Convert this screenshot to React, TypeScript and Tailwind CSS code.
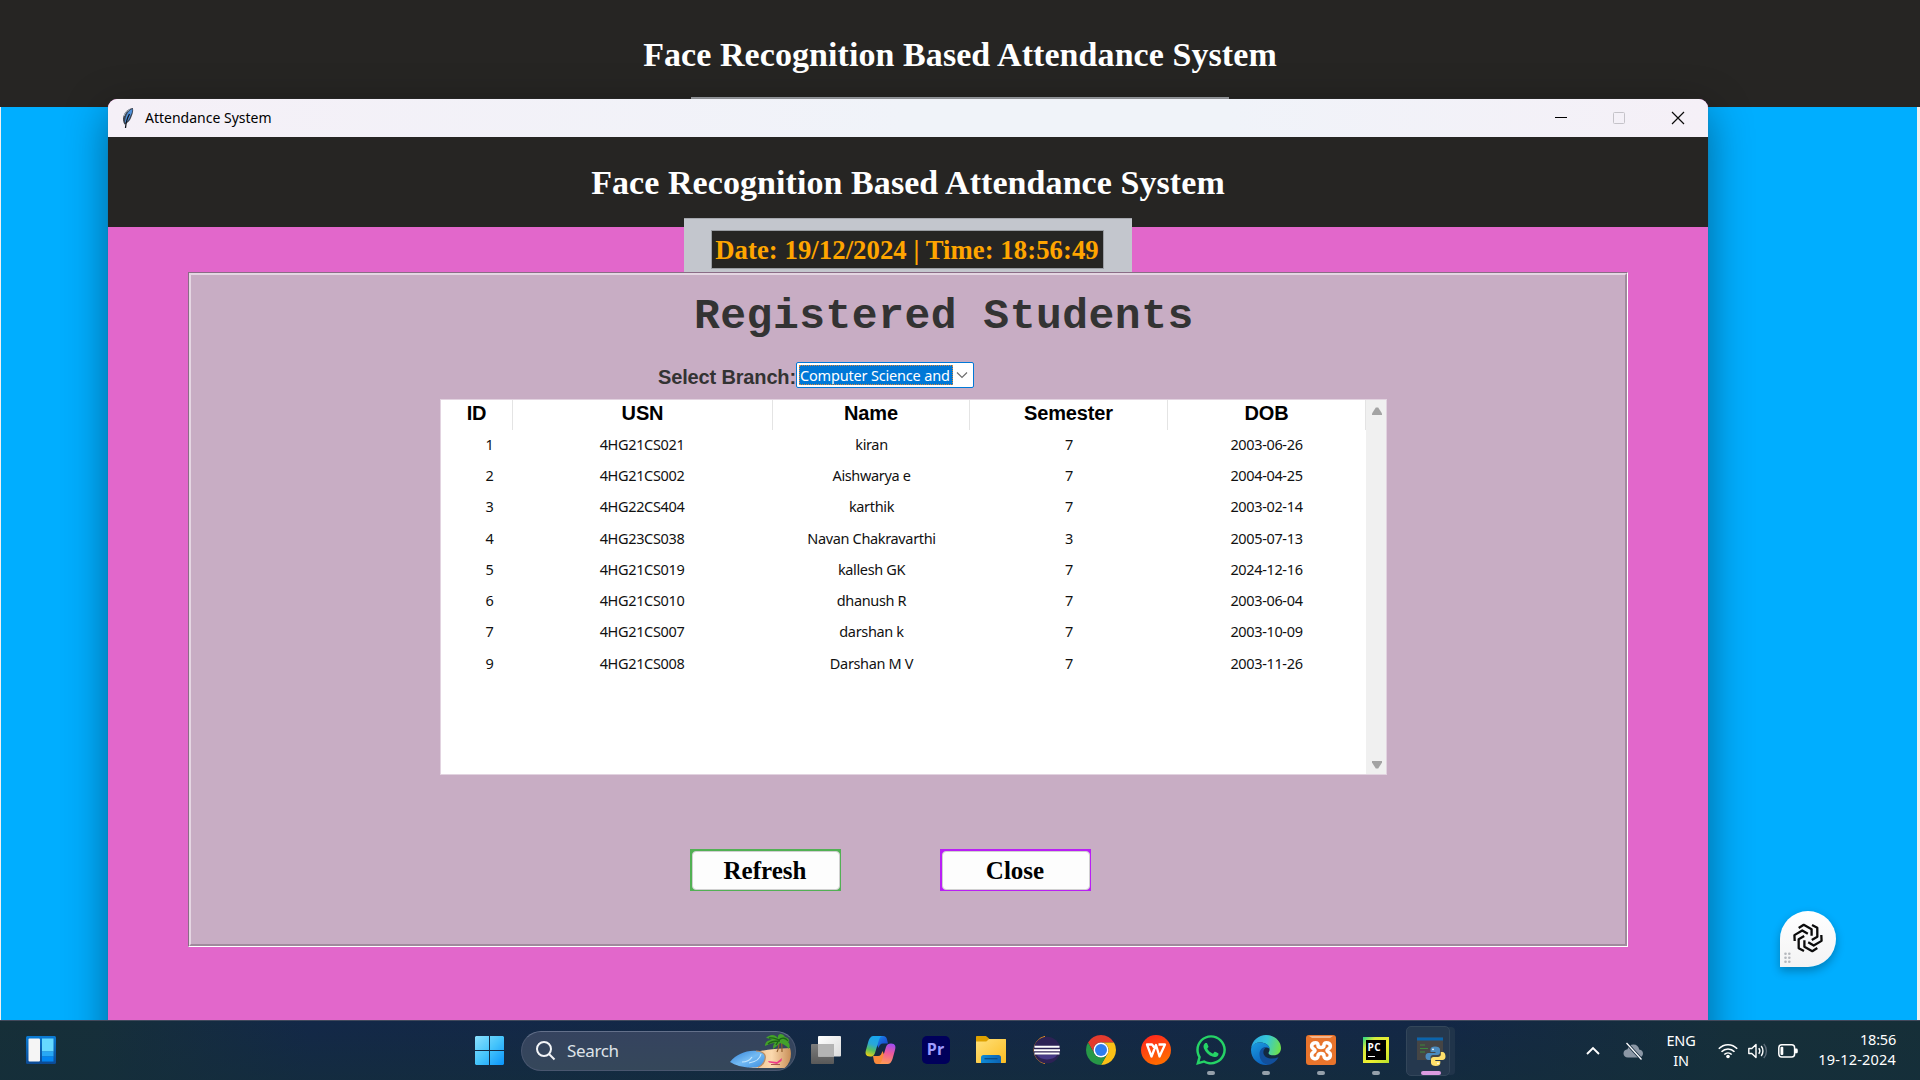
import type { ReactNode } from "react";
import { FaWhatsapp } from "react-icons/fa";

type Student = { id: number; usn: string; name: string; semester: number; dob: string };

const TITLE = "Face Recognition Based Attendance System";

const students: Student[] = [
  { id: 1, usn: "4HG21CS021", name: "kiran", semester: 7, dob: "2003-06-26" },
  { id: 2, usn: "4HG21CS002", name: "Aishwarya e", semester: 7, dob: "2004-04-25" },
  { id: 3, usn: "4HG22CS404", name: "karthik", semester: 7, dob: "2003-02-14" },
  { id: 4, usn: "4HG23CS038", name: "Navan Chakravarthi", semester: 3, dob: "2005-07-13" },
  { id: 5, usn: "4HG21CS019", name: "kallesh GK", semester: 7, dob: "2024-12-16" },
  { id: 6, usn: "4HG21CS010", name: "dhanush R", semester: 7, dob: "2003-06-04" },
  { id: 7, usn: "4HG21CS007", name: "darshan k", semester: 7, dob: "2003-10-09" },
  { id: 9, usn: "4HG21CS008", name: "Darshan M V", semester: 7, dob: "2003-11-26" },
];

const COLS = "grid grid-cols-[72px_260px_197px_198px_198px]";

function Heading() {
  return (
    <h1 className="mt-[2px] whitespace-nowrap font-['Liberation_Serif',serif] text-[34px] leading-[40px] font-bold tracking-[0.070px] text-white">
      {TITLE}
    </h1>
  );
}

function FeatherIcon() {
  return (
    <svg width="14" height="22" viewBox="0 0 14 22">
      <path d="M12 1C8 1.500 4 4 2.500 9C1.500 12 2 15 3.500 17.500C6.500 16 9 14 10 11C11 8 12.800 5 12 1Z" fill="#3a4452" />
      <path d="M11.500 2C8.500 3 6 6 5 9.500C4.400 12 4 14 4 16C6 14.500 8 13 8.800 10.500C9.500 8 11.500 5.500 11.500 2Z" fill="#4f8fd8" />
      <path d="M8.500 7C6.500 10.500 5 14 4.500 21" stroke="#10151d" strokeWidth="1.300" fill="none" />
      <path d="M3 9C3.800 6.500 5.500 4 8.500 2.500" stroke="#b9c4d2" strokeWidth="1" fill="none" />
    </svg>
  );
}

function TitleBar() {
  return (
    <div className="flex h-[38px] shrink-0 items-center bg-[linear-gradient(90deg,#f5f0f7_0%,#f0f3f9_50%,#f0f3f9_70%,#f5f0f7_100%)] pl-[13px]">
      <FeatherIcon />
      <span className="ml-[10px] font-['Noto_Sans',sans-serif] text-[14px] leading-[20px] text-black">Attendance System</span>
      <div className="ml-auto flex items-center">
        <svg width="160" height="38" viewBox="0 0 160 38" fill="none">
          <path d="M7 18.500H19" stroke="#000" />
          <rect x="65.500" y="13.500" width="11" height="11" rx="1" stroke="#c5c3c9" />
          <path d="M124 13L136 25M136 13L124 25" stroke="#0a0a0a" strokeWidth="1.200" />
        </svg>
      </div>
    </div>
  );
}

function BranchSelect() {
  return (
    <div className="flex h-[26px] w-[178px] items-center rounded-[2px] border border-[#0078d7] bg-white p-[2px]">
      <div className="flex h-[20px] w-[154px] items-center overflow-hidden border border-dotted border-[#d98a3c] bg-[#0078d7]">
        <span className="whitespace-nowrap font-['Noto_Sans',sans-serif] text-[14.500px] leading-[18px] tracking-[-0.180px] text-white">
          Computer Science and
        </span>
      </div>
      <svg className="mx-auto" width="12" height="8" viewBox="0 0 12 8" fill="none">
        <path d="M1 1.500L6 6.500L11 1.500" stroke="#6e6e6e" strokeWidth="1.200" />
      </svg>
    </div>
  );
}

function StudentTable() {
  return (
    <div className="flex h-[376px] w-[947px] border border-[#e2d3e0] bg-white">
      <div className="w-[925px]">
        <div className={`${COLS} h-[30px] font-['Liberation_Sans',sans-serif] text-[20px] leading-[27px] font-bold tracking-[-0.150px] text-black`}>
          {["ID", "USN", "Name", "Semester", "DOB"].map((h) => (
            <div key={h} className="border-r border-[#e4e4e4] text-center">
              {h}
            </div>
          ))}
        </div>
        <div className="font-['Noto_Sans',sans-serif] text-[14.500px] tracking-[-0.350px] text-[#111]">
          {students.map((s) => (
            <div key={s.id} className={`${COLS} h-[31.240px] text-center leading-[29px]`}>
              <div className="pl-[25px]">{s.id}</div>
              <div className="pr-[2px]">{s.usn}</div>
              <div>{s.name}</div>
              <div>{s.semester}</div>
              <div className="pr-px">{s.dob}</div>
            </div>
          ))}
        </div>
      </div>
      <div className="flex flex-1 flex-col items-center justify-between bg-[#f0f0f0] pt-[7px] pb-[5px] pl-px">
        <svg width="10" height="8" viewBox="0 0 10 8">
          <path d="M3.800 0.500H6.200L10 6.500V8H0V6.500Z" fill="#a3a3a3" />
        </svg>
        <svg width="10" height="8" viewBox="0 0 10 8">
          <path d="M0 0H10V1.500L6.200 7.500H3.800L0 1.500Z" fill="#a3a3a3" />
        </svg>
      </div>
    </div>
  );
}

function TkButton({ label, color }: { label: string; color: string }) {
  return (
    <div className={`h-[42px] w-[151px] p-[1.500px] ${color}`}>
      <div className="flex h-full items-center justify-center rounded-[4px] border border-[#d0d0d0] bg-[#fdfdfd] pr-px font-['Liberation_Serif',serif] text-[25px] leading-none font-bold text-black">
        {label}
      </div>
    </div>
  );
}

function AttendanceWindow() {
  return (
    <div className="absolute top-[99px] left-[108px] flex h-[960px] w-[1600px] flex-col overflow-hidden rounded-t-[9px] bg-[#e267cb] shadow-[0_12px_44px_rgba(0,0,0,0.420),0_0_1px_rgba(120,110,120,0.900)]">
      <TitleBar />
      <div className="flex h-[90px] shrink-0 items-center justify-center bg-[#262523]">
        <Heading />
      </div>
      <div className="relative mx-auto -mt-[9px] flex h-[54px] w-[448px] shrink-0 justify-center border-t border-[#a5a8ae] bg-[#c3c6cd] pt-[12px] pr-[2px]">
        <div className="flex h-[37px] w-[391px] items-center justify-center bg-[#262523] outline outline-[#9a9da3]">
          <span className="whitespace-nowrap font-['Liberation_Serif',serif] text-[26.700px] leading-[30px] font-bold tracking-[0.060px] text-[#ffa500]">
            Date: 19/12/2024 | Time: 18:56:49
          </span>
        </div>
      </div>
      <div className="ml-[80px] h-[675px] w-[1440px] shrink-0 border border-t-[#8a6c86] border-r-white border-b-white border-l-[#8a6c86]">
        <div className="flex h-full flex-col border-2 border-t-[#e4d6e2] border-r-[#a08a9d] border-b-[#a08a9d] border-l-[#e4d6e2] bg-[#c8adc4]">
          <h2 className="mt-[17px] ml-[503px] font-['Liberation_Mono',monospace] text-[43px] leading-[50px] font-bold tracking-[0.500px] whitespace-nowrap text-[#333]">
            Registered Students
          </h2>
          <div className="mt-[19px] ml-[467px] flex items-center">
            <span className="w-[138px] pt-[4px] font-['Liberation_Sans',sans-serif] text-[20px] leading-[24px] font-bold tracking-[-0.150px] whitespace-nowrap text-[#333]">
              Select Branch:
            </span>
            <BranchSelect />
          </div>
          <div className="mt-[10px] ml-[249px]">
            <StudentTable />
          </div>
          <div className="mt-[74px] ml-[499px] flex gap-[99px]">
            <TkButton label="Refresh" color="bg-[#52b054]" />
            <TkButton label="Close" color="bg-[#b91ff5]" />
          </div>
        </div>
      </div>
    </div>
  );
}

function FloatingAssistant() {
  return (
    <div className="absolute top-[911px] left-[1780px] flex h-[56px] w-[56px] items-center justify-center rounded-full rounded-bl-[3px] bg-linear-to-b from-white to-[#f3f3f4] shadow-[0_4px_10px_rgba(0,0,0,0.280)]">
      <svg width="56" height="56" viewBox="-28 -28 56 56" fill="none">
        {[0, 60, 120, 180, 240, 300].map((a) => (
          <path key={a} transform={`translate(0 -1) rotate(${a})`} d="M-9.300 -10L-4.300 -13.200L3.600 -8.700V-2.300" stroke="#0b0b0b" strokeWidth="2.300" strokeLinejoin="round" />
        ))}
        {[14.700, 18.700, 22.700].map((y) => (
          <g key={y} fill="#b4b7bd">
            <circle cx="-22.500" cy={y} r="1.300" />
            <circle cx="-18.700" cy={y} r="1.300" />
          </g>
        ))}
      </svg>
    </div>
  );
}

function WidgetsIcon() {
  return (
    <svg width="30" height="28" viewBox="0 0 30 28">
      <defs>
        <linearGradient id="wg" x1="0" y1="0" x2="0" y2="1"><stop stopColor="#0a7bd4" /><stop offset="1" stopColor="#0c4a94" /></linearGradient>
      </defs>
      <rect width="30" height="28" rx="1.500" fill="url(#wg)" />
      <rect x="2.500" y="2.500" width="11.500" height="23" rx="1" fill="#f5f5f5" />
      <rect x="16" y="2.500" width="11.500" height="13" fill="#66d9ff" />
      <rect x="16" y="15.500" width="11.500" height="5" fill="#28a8f5" />
      <rect x="16" y="20.500" width="11.500" height="5" fill="#0385f0" />
    </svg>
  );
}

function StartIcon() {
  return (
    <svg width="29" height="29" viewBox="0 0 29 29">
      <defs>
        <linearGradient id="st" x1="0" y1="0" x2="1" y2="1"><stop stopColor="#8be0fd" /><stop offset="0.500" stopColor="#45c4fb" /><stop offset="1" stopColor="#0a94fb" /></linearGradient>
      </defs>
      <path fill="url(#st)" d="M1 0H14V14H0V1ZM15 0H28L29 1V14H15ZM0 15H14V29H1L0 28ZM15 15H29V28L28 29H15Z" />
    </svg>
  );
}

function BeachArt() {
  return (
    <svg width="64" height="38" viewBox="0 0 64 38">
      <defs>
        <linearGradient id="sd" x1="0" y1="0" x2="1" y2="0"><stop stopColor="#e8b680" /><stop offset="0.600" stopColor="#fbd9ae" /><stop offset="1" stopColor="#c98f58" /></linearGradient>
        <linearGradient id="wt" x1="0" y1="0" x2="1" y2="1"><stop stopColor="#2f7fd6" /><stop offset="0.500" stopColor="#74bbf3" /><stop offset="1" stopColor="#3c8fe0" /></linearGradient>
      </defs>
      <path d="M14 31C20 19 36 17 61 16C63 22 62 30 56 36H24C19 35 15 34 14 31Z" fill="url(#sd)" />
      <path d="M1 30C8 22 17 18 28 19C36 19.500 38 24 35 30C32 35 28 36 22 35.500C13 35.500 6 33 1 30Z" fill="url(#wt)" />
      <path d="M27 19C36 19.500 38 24 35 30C33.500 33 31.500 34.500 29 35.300" stroke="#b98b60" strokeWidth="1.200" fill="none" />
      <path d="M20 31C26 30 31 27 32 22M13 30C17 30 21 28 23 25" stroke="#c3e6fc" strokeWidth="1.200" fill="none" />
      <path d="M48 20C50 16 50 11 49 8M53 20C53 15 53 11 52 8" stroke="#8f5c2c" strokeWidth="1.200" fill="none" />
      <path d="M49 6C45 1 40 3 37 6C40 6 41 7 43 8C39 8 36 10 36 14C40 12 43 11 46 11C44 13 44 14 44 17C47 15 49 13 51 11C54 12 57 13 60 17C61 14 61 12 59 10C61 9 60 6 56 5C54 1 48 1 49 6Z" fill="#43a12a" />
      <path d="M40 6C44 5 47 7 50 8C53 5 57 6 59 9M39 12C43 8.500 48 9 51 9M50 8L47 13" stroke="#1c6416" strokeWidth="1.300" fill="none" />
      <path d="M39 29L48 30L53 26L52.500 29L48 32L40 30.500Z" fill="#ee3b86" />
      <path d="M42 32.500H51" stroke="#a8584c" strokeWidth="1" />
    </svg>
  );
}

function SearchBox() {
  return (
    <div className="flex h-[40px] w-[275px] items-center overflow-hidden rounded-full border border-[#49566f] border-t-[#63708a] bg-linear-to-b from-[#35435f] to-[#35475a] pl-[13px]">
      <svg width="22" height="22" viewBox="0 0 22 22" fill="none" stroke="#f2f4f7" strokeWidth="2">
        <circle cx="9" cy="9" r="7" />
        <path d="M14 14L19.500 19.500" />
      </svg>
      <span className="ml-[10px] font-['Noto_Sans',sans-serif] text-[17px] leading-[24px] tracking-[-0.350px] text-[#dfe3e9]">Search</span>
      <div className="mt-[1px] mr-[2px] ml-auto">
        <BeachArt />
      </div>
    </div>
  );
}

function TaskViewIcon() {
  return (
    <svg width="30" height="28" viewBox="0 0 30 28">
      <defs>
        <linearGradient id="tv" x1="0" y1="0" x2="1" y2="1"><stop stopColor="#fff" /><stop offset="1" stopColor="#dcdcdc" /></linearGradient>
        <linearGradient id="tb" x1="0" y1="0" x2="0" y2="1"><stop stopColor="#7c7c7c" /><stop offset="1" stopColor="#595959" /></linearGradient>
      </defs>
      <rect y="8" width="23" height="20" rx="1" fill="url(#tb)" />
      <rect x="7" width="23" height="20.500" rx="1" fill="url(#tv)" />
      <path d="M7 8H23V20.500H7Z" fill="#b4b4b4" />
    </svg>
  );
}

function CopilotIcon() {
  return (
    <svg width="31" height="28" viewBox="0 0 31 28">
      <defs>
        <linearGradient id="c1" x1="0.500" y1="0" x2="0.200" y2="1"><stop stopColor="#18a5ee" /><stop offset="0.400" stopColor="#2aa7d8" /><stop offset="0.680" stopColor="#58bf5c" /><stop offset="1" stopColor="#f2cf12" /></linearGradient>
        <linearGradient id="c2" x1="0.600" y1="0" x2="0.400" y2="1"><stop stopColor="#a14cf0" /><stop offset="0.450" stopColor="#ee5a9b" /><stop offset="1" stopColor="#ff9b55" /></linearGradient>
        <linearGradient id="c3" x1="0" y1="0" x2="1" y2="1"><stop stopColor="#1b8ff0" /><stop offset="1" stopColor="#1838c4" /></linearGradient>
      </defs>
      <path d="M14 0H18C20.500 0 21.500 1.500 22 3.500L23 7.500H18C15.500 7.500 14.500 9 13.500 12L10 4Z" fill="url(#c3)" />
      <path d="M8 20H13C15.500 20 16.500 18 17.500 15L21 23C20 26.500 18.500 28 16 28H12C10 28 9.300 26.500 8.800 24.500Z" fill="#f98a3c" />
      <path d="M8.500 0H18C15.500 0 14.600 2 13.800 4.500L10 17C9 20 7.500 20.500 5 20.500C0.500 20.500 0 17.500 1 14L3.500 5C4.500 2 6 0 8.500 0Z" fill="url(#c1)" />
      <path d="M22.500 28H13C15.500 28 16.400 26 17.200 23.500L21 11C22 8 23.500 7.500 26 7.500C30.500 7.500 31 10.500 30 14L27.500 23C26.500 26 25 28 22.500 28Z" fill="url(#c2)" />
    </svg>
  );
}

function PremiereIcon() {
  return (
    <div className="flex h-[28px] w-[28px] items-center justify-center rounded-[5px] bg-[#00005b]">
      <span className="pb-px font-['Open_Sans',sans-serif] text-[16px] leading-none font-bold text-[#9f9cff]">Pr</span>
    </div>
  );
}

function FolderIcon() {
  return (
    <svg width="30" height="27" viewBox="0 0 30 27">
      <defs>
        <linearGradient id="fo" x1="0" y1="0" x2="1" y2="1"><stop stopColor="#ffe07a" /><stop offset="1" stopColor="#fbbd22" /></linearGradient>
        <linearGradient id="fb" x1="0" y1="0" x2="1" y2="0"><stop stopColor="#0f8ad6" /><stop offset="1" stopColor="#0c63b4" /></linearGradient>
      </defs>
      <path d="M0 1C0 0.400 0.400 0 1 0H9C10 0 10.500 0.300 11 0.800L13.500 3H29C29.600 3 30 3.400 30 4V12H0Z" fill="#dea100" />
      <path d="M0 5.500H9.500C10.500 5.500 11 5 11.500 4.500L13 3H29C29.600 3 30 3.400 30 4V26C30 26.600 29.600 27 29 27H1C0.400 27 0 26.600 0 26Z" fill="url(#fo)" />
      <path d="M5 27V21.500C5 20 6 19 7.500 19H22.500C24 19 25 20 25 21.500V27Z" fill="url(#fb)" />
      <path d="M8.500 22.700H21.500" stroke="#0a4a86" strokeWidth="1.300" />
    </svg>
  );
}

function EclipseIcon() {
  return (
    <svg width="31" height="28" viewBox="0 0 31 28">
      <path d="M15 0.300A14 14 0 0 0 15 27.700A17 17 0 0 1 15 0.300Z" fill="#f7941e" stroke="#f7941e" strokeWidth="0.800" />
      <circle cx="17" cy="14" r="13.300" fill="#2c2255" />
      <path d="M6.500 18.500H27.500A12 9.500 0 0 1 6.500 18.500Z" fill="#463a86" />
      <path d="M4.500 10.800H29.500M4 14.200H30M4.500 17.600H29.500" stroke="#fff" strokeWidth="2" />
    </svg>
  );
}

function ChromeIcon() {
  return (
    <svg width="30" height="30" viewBox="2 2 44 44">
      <path d="M24 13H43.050A22 22 0 0 0 4.950 13L14.470 29.500A11 11 0 0 1 24 13Z" fill="#e33b2e" />
      <path d="M33.530 29.500L24 46A22 22 0 0 0 43.050 13H24A11 11 0 0 1 33.530 29.500Z" fill="#fbc116" />
      <path d="M14.470 29.500L4.950 13A22 22 0 0 0 24 46L33.530 29.500A11 11 0 0 1 14.470 29.500Z" fill="#279847" />
      <circle cx="24" cy="24" r="11" fill="#fff" />
      <circle cx="24" cy="24" r="8.800" fill="#2d7df0" />
    </svg>
  );
}

function WpsIcon() {
  return (
    <svg width="30" height="30" viewBox="0 0 30 30">
      <defs>
        <linearGradient id="wp" x1="0" y1="0" x2="0.400" y2="1"><stop stopColor="#ff2020" /><stop offset="1" stopColor="#ff6a00" /></linearGradient>
      </defs>
      <circle cx="15" cy="15" r="15" fill="url(#wp)" />
      <path d="M14 13.500L11 9.500H6L10.500 21.500L15 10L18.500 21.500L24 9.500H17.500" stroke="#fff" strokeWidth="2.300" strokeLinejoin="round" fill="none" />
    </svg>
  );
}

function EdgeIcon() {
  return (
    <svg width="30" height="30" viewBox="0 0 30 30">
      <defs>
        <linearGradient id="e1" x1="0" y1="0.300" x2="1" y2="0.500"><stop stopColor="#2ba9e4" /><stop offset="0.500" stopColor="#36c8d8" /><stop offset="1" stopColor="#6ee04c" /></linearGradient>
        <linearGradient id="e2" x1="0" y1="0" x2="0.500" y2="1"><stop stopColor="#1b9de2" /><stop offset="1" stopColor="#0c62bd" /></linearGradient>
      </defs>
      <path d="M0.200 13C1.200 5.500 7.500 0 15 0C23.500 0 30 6 30 13C30 17.500 27 20.300 22.500 20.300C19.500 20.300 17.500 19.300 17.500 18C17.500 17.200 18.600 16.600 18.600 14.500C18.600 10 14 7.500 9 7.500C5 7.500 2 9.500 0.200 13Z" fill="url(#e1)" />
      <path d="M0 15C0 10.500 4 7.500 9 7.500C14 7.500 18.600 10 18.600 14C15 10.500 9 13.500 9 19C9 24.500 13 29 18 29.700C9 31.500 0 25 0 15Z" fill="url(#e2)" />
      <path d="M8.500 19C8.500 15 11.500 11.500 15.500 12C13 14 12 16 12.500 18.500C13.500 23 20 25 27.500 22.300C25 27 21 29.300 17.500 29.800C12.500 29.500 8.500 25 8.500 19Z" fill="#124f9c" />
    </svg>
  );
}

function XamppIcon() {
  return (
    <div className="flex h-[30px] w-[30px] items-center justify-center overflow-hidden rounded-[3px] bg-[#e8742c]">
      <svg width="30" height="30" viewBox="0 0 30 30" fill="none">
        <path d="M3 1H27L24 3H6Z" fill="#f3b58c" />
        <path d="M8 8C11 7.300 12 8 12 10C12 12 13.500 12.500 15 12.500S18 12 18 10C18 8 19 7.300 22 8C25 9 25 12.500 22.500 13.800C20.500 14.800 20.500 16.200 22.500 17.200C25 18.500 25 22.500 22 23.500C19.500 24 18 23 18 21C18 19 16.500 18.500 15 18.500S12 19 12 21C12 23 10.500 24 8 23.500C5 22.500 5 18.500 7.500 17.200C9.500 16.200 9.500 14.800 7.500 13.800C5 12.500 5 9 8 8Z" stroke="#fff" strokeWidth="3.600" strokeLinejoin="round" />
      </svg>
    </div>
  );
}

function PycharmIcon() {
  return (
    <div className="flex h-[26px] w-[26px] items-center justify-center bg-[linear-gradient(135deg,#21d789_0%,#d5ec3c_25%,#f0ee30_60%,#b8e02c_100%)]">
      <div className="flex h-[20px] w-[20px] flex-col bg-black pt-[2px] pl-[2px]">
        <span className="font-['Open_Sans',sans-serif] text-[10px] leading-[10px] font-bold tracking-[0.400px] text-white">PC</span>
        <div className="mt-[4px] h-[1.500px] w-[7px] bg-white" />
      </div>
    </div>
  );
}

function PythonConsoleIcon() {
  return (
    <svg width="30" height="30" viewBox="0 0 30 30">
      <rect x="1" y="1.500" width="26" height="22.500" fill="#454545" />
      <rect x="1" y="1.500" width="26" height="3" fill="#0a64ad" />
      <path d="M4 9H9M4 12.500H12M4 16H9" stroke="#3d8a3d" strokeWidth="1.200" />
      <path d="M19 10.500C16 10.500 14.500 11.500 14.500 13.500V16H19.500V17H12.500C10.500 17 9.500 18.500 9.500 20.500C9.500 22.800 10.500 24 12.500 24H14.500V21.500C14.500 20 15.500 19 17 19H21.500C23 19 24 18 24 16.500V13.500C24 11.500 22 10.500 19 10.500Z" fill="#4b8bbf" />
      <path d="M19.800 30C22.800 30 24.300 29 24.300 27V25H19.300V24H26.300C28.500 24 29.500 22.500 29.500 20.500C29.500 18 28.500 16 26.300 16H24.800V18.500C24.800 20 23.500 21 22 21H17.500C16 21 15 22 15 23.500V27C15 29 17 30 19.800 30Z" fill="#ffe06b" />
      <circle cx="17" cy="13.300" r="0.900" fill="#fff" />
      <circle cx="22" cy="27.300" r="0.900" fill="#fff" />
    </svg>
  );
}

function TaskItem({ children, running }: { children: ReactNode; running?: boolean }) {
  return (
    <div className="relative flex h-[60px] w-[55px] items-center justify-center pb-[2px]">
      {children}
      {running && <div className="absolute bottom-[5.500px] h-[4px] w-[8px] rounded-full bg-[#95a0ab]" />}
    </div>
  );
}

function ActiveTaskItem({ children }: { children: ReactNode }) {
  return (
    <div className="relative ml-[3px] flex h-[50px] w-[44px] items-center justify-center rounded-[5px] border border-[#33465a] bg-[#25384e] pl-[6px] shadow-[6px_0_0_-1px_#20344a]">
      {children}
      <div className="absolute bottom-0 left-[14px] h-[4px] w-[20px] rounded-full bg-[#dc9be2]" />
    </div>
  );
}

function SystemTray() {
  return (
    <div className="ml-auto flex h-full items-center text-white">
      <svg width="14" height="9" viewBox="0 0 14 9" fill="none" stroke="#fff" strokeWidth="1.900">
        <path d="M1 8L7 2L13 8" />
      </svg>
      <svg className="ml-[22px]" width="22" height="18" viewBox="0 0 22 18">
        <path d="M6 15.500C3 15.500 1.500 13.800 1.500 11.500C1.500 9 3.200 7.500 5.500 7.300C6.300 4.500 8.500 2.500 11.500 2.500C14.700 2.500 16.800 4.500 17.200 7.500C19.500 7.700 21 9.300 21 11.500C21 13.800 19.500 15.500 17 15.500Z" fill="#8b97a5" />
        <path d="M4.500 1L19.500 17.500" stroke="#132a3d" strokeWidth="3" />
        <path d="M4.500 1L19.500 17.500" stroke="#fff" strokeWidth="1.300" />
      </svg>
      <div className="ml-[17px] w-[40px] pb-[2px] text-center font-['Noto_Sans',sans-serif] text-[14.500px] leading-[20px] tracking-[-0.200px]">
        <div>ENG</div>
        <div>IN</div>
      </div>
      <svg className="ml-[17px]" width="20" height="16" viewBox="0 0 20 16" fill="none" stroke="#fff" strokeWidth="1.600">
        <path d="M0.800 5.800C6 0.300 14 0.300 19.200 5.800M3.500 8.800C7.200 5 12.800 5 16.500 8.800M6.300 11.500C8.400 9.500 11.600 9.500 13.700 11.500" />
        <circle cx="10" cy="13.500" r="1.800" fill="#fff" stroke="none" />
      </svg>
      <svg className="ml-[10px]" width="20" height="16" viewBox="0 0 20 16" fill="none" stroke="#fff" strokeWidth="1.400">
        <path d="M0.800 5.500H3.800L8 1.500V14.500L3.800 10.500H0.800Z" strokeLinejoin="round" />
        <path d="M10.800 5.200C12 6.800 12 9.200 10.800 10.800M13.200 3C15.500 5.800 15.500 10.200 13.200 13" />
        <path d="M15.800 1C19.300 4.800 19.300 11.200 15.800 15" stroke="#5c6b78" />
      </svg>
      <svg className="ml-[10px]" width="20" height="14" viewBox="0 0 20 14" fill="none">
        <rect x="0.800" y="0.800" width="15.800" height="12.200" rx="3" stroke="#fff" strokeWidth="1.500" />
        <rect x="2.500" y="2.800" width="2.800" height="8.200" rx="1" fill="#fff" />
        <path d="M17 4.500H18.500C19.300 4.500 19.800 5 19.800 7S19.300 9.300 18.500 9.300H17Z" fill="#fff" />
      </svg>
      <div className="mr-[24px] w-[98px] pb-[4px] text-right font-['Noto_Sans',sans-serif] text-[14.500px] leading-[20px]">
        <div className="tracking-[-0.200px]">18:56</div>
        <div className="tracking-[0.200px]">19-12-2024</div>
      </div>
    </div>
  );
}

function Taskbar() {
  return (
    <div className="absolute bottom-0 left-0 flex h-[60px] w-full items-center border-t border-[#42495c] bg-[linear-gradient(180deg,rgba(22,47,58,0)_0%,rgba(20,46,58,0.600)_100%),linear-gradient(90deg,#162f38_0%,#162f3a_5%,#132848_16%,#132746_75%,#162f3a_90%,#162f38_100%)]">
      <div className="ml-[26px] w-[449px] pb-px">
        <WidgetsIcon />
      </div>
      <StartIcon />
      <div className="ml-[17px]">
        <SearchBox />
      </div>
      <div className="ml-[2px] flex items-center">
        <TaskItem><TaskViewIcon /></TaskItem>
        <TaskItem><CopilotIcon /></TaskItem>
        <TaskItem><PremiereIcon /></TaskItem>
        <TaskItem><FolderIcon /></TaskItem>
        <TaskItem><EclipseIcon /></TaskItem>
        <TaskItem><ChromeIcon /></TaskItem>
        <TaskItem><WpsIcon /></TaskItem>
        <TaskItem running><FaWhatsapp size={34} color="#25d366" className="shrink-0" /></TaskItem>
        <TaskItem running><EdgeIcon /></TaskItem>
        <TaskItem running><XamppIcon /></TaskItem>
        <TaskItem running><PycharmIcon /></TaskItem>
        <ActiveTaskItem><PythonConsoleIcon /></ActiveTaskItem>
      </div>
      <SystemTray />
    </div>
  );
}

export default function App() {
  return (
    <div className="relative flex h-[1080px] w-[1920px] flex-col overflow-hidden bg-[#00aeff]">
      <div className="flex h-[107px] shrink-0 items-center justify-center bg-[#262523]">
        <Heading />
      </div>
      <div className="relative mx-auto -mt-[10px] h-[10px] w-[538px] bg-[#a3a6ab]" />
      <div className="flex-1 border-r-[3px] border-l border-r-[#f0f0f0] border-l-[#f0f0f0]" />
      <AttendanceWindow />
      <FloatingAssistant />
      <Taskbar />
    </div>
  );
}
